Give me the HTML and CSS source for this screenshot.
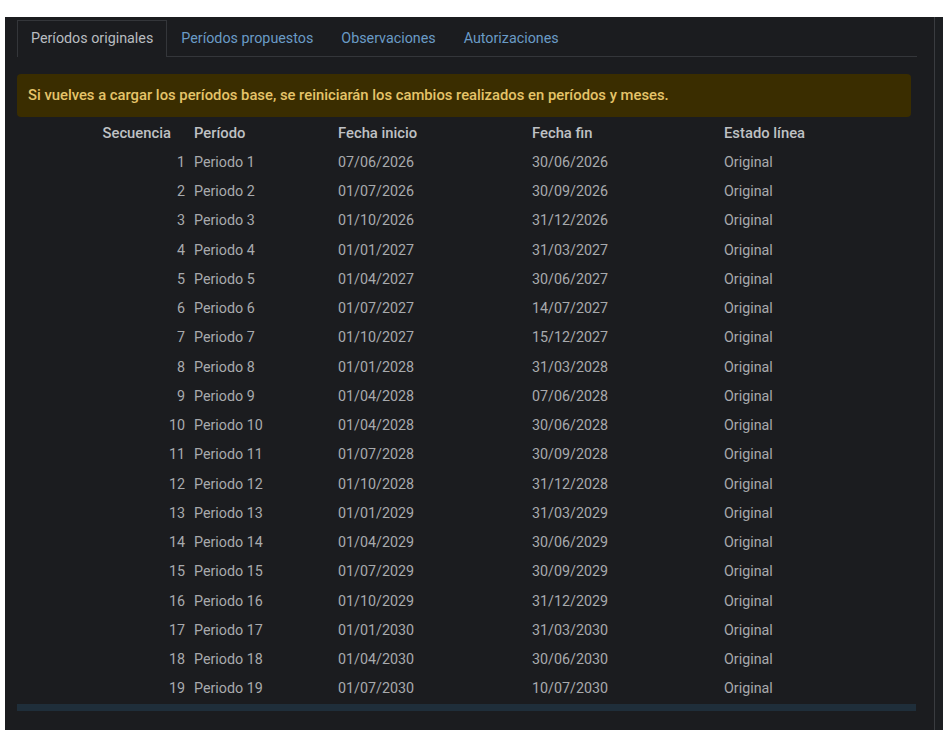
FILE: index.html
```html
<!DOCTYPE html>
<html lang="es">
<head>
    <meta charset="UTF-8">
    <meta name="viewport" content="width=device-width, initial-scale=1.0">
    <title>Períodos</title>
    <link rel="stylesheet" href="styles.css">
</head>
<body>
    <div class="panel">
        <div class="content">
            <ul class="tabs">
                <li class="tab active">Períodos originales</li>
                <li class="tab">Períodos propuestos</li>
                <li class="tab">Observaciones</li>
                <li class="tab">Autorizaciones</li>
            </ul>
            <div class="warning">Si vuelves a cargar los períodos base, se reiniciarán los cambios realizados en períodos y meses.</div>
            <table class="periods">
                <colgroup>
                    <col class="c-seq">
                    <col class="c-per">
                    <col class="c-ini">
                    <col class="c-fin">
                    <col class="c-est">
                </colgroup>
                <thead>
                    <tr>
                        <th class="seq">Secuencia</th>
                        <th>Período</th>
                        <th>Fecha inicio</th>
                        <th>Fecha fin</th>
                        <th>Estado línea</th>
                    </tr>
                </thead>
                <tbody id="rows"></tbody>
            </table>
            <div class="hbar"></div>
        </div>
        <div class="vscroll"></div>
    </div>

    <script>
        var data = [
            ['07/06/2026', '30/06/2026'],
            ['01/07/2026', '30/09/2026'],
            ['01/10/2026', '31/12/2026'],
            ['01/01/2027', '31/03/2027'],
            ['01/04/2027', '30/06/2027'],
            ['01/07/2027', '14/07/2027'],
            ['01/10/2027', '15/12/2027'],
            ['01/01/2028', '31/03/2028'],
            ['01/04/2028', '07/06/2028'],
            ['01/04/2028', '30/06/2028'],
            ['01/07/2028', '30/09/2028'],
            ['01/10/2028', '31/12/2028'],
            ['01/01/2029', '31/03/2029'],
            ['01/04/2029', '30/06/2029'],
            ['01/07/2029', '30/09/2029'],
            ['01/10/2029', '31/12/2029'],
            ['01/01/2030', '31/03/2030'],
            ['01/04/2030', '30/06/2030'],
            ['01/07/2030', '10/07/2030']
        ];
        var body = document.getElementById('rows');
        data.forEach(function(d, i) {
            var tr = document.createElement('tr');
            tr.innerHTML = '<td class="seq">' + (i + 1) + '</td>' +
                '<td>Periodo ' + (i + 1) + '</td>' +
                '<td>' + d[0] + '</td>' +
                '<td>' + d[1] + '</td>' +
                '<td>Original</td>';
            body.appendChild(tr);
        });
    </script>
</body>
</html>
```

FILE: styles.css
```css
html, body {
    margin: 0;
    padding: 0;
    background: #ffffff;
    height: 100%;
}
body {
    font-family: Roboto, "Liberation Sans", sans-serif;
    font-size: 14px;
}
.panel {
    margin: 17px 0 0 5px;
    height: calc(100% - 17px);
    background: #1b1c1f;
    display: flex;
}
.content {
    flex: 1;
    padding: 3px 17px 0 12px;
}
.vscroll {
    width: 8px;
    border-left: 1px solid #3a3c40;
    background: #1c1e21;
}
.tabs {
    list-style: none;
    margin: 0;
    padding: 0;
    display: flex;
    border-bottom: 1px solid #34363a;
}
.tab {
    padding: 0 13px;
    height: 35px;
    line-height: 35px;
    font-size: 14.3px;
    color: #6a9bc6;
    border: 1px solid transparent;
    border-bottom: none;
    margin-bottom: -1px;
}
.tab.active {
    color: #b9bcc0;
    border-color: #34363a;
    background: #1b1c1f;
    height: 36px;
}
.warning {
    margin: 17px 6px 0 0;
    height: 43px;
    line-height: 43px;
    padding: 0 11px;
    background: #3a2d00;
    border-radius: 4px;
    color: #e5c46a;
    font-weight: 500;
    font-size: 14.8px;
}
.periods {
    margin-top: 1px;
    border-collapse: collapse;
    table-layout: fixed;
    width: 100%;
}
.c-seq { width: 173px; }
.c-per { width: 144px; }
.c-ini { width: 194px; }
.c-fin { width: 192px; }
.periods th, .periods td {
    height: 29.25px;
    padding: 0 0 0 4px;
    text-align: left;
    white-space: nowrap;
}
.periods th {
    color: #bfc1c4;
    font-weight: 500;
    font-size: 14.8px;
}
.periods td {
    color: #a8aaad;
    font-size: 14.3px;
}
.periods .seq {
    text-align: right;
    padding: 0 5px 0 0;
}
.periods th.seq {
    padding-right: 19px;
}
.hbar {
    margin-top: 1px;
    height: 7px;
    background: #1f2e3a;
    margin-right: 1px;
}
```
